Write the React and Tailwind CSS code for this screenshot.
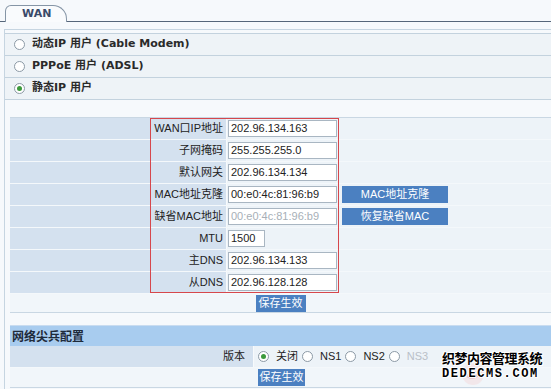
import React from "react";

const font = { fontFamily: '"Liberation Sans", "Noto Sans CJK SC", sans-serif' };
const boldFont = { fontFamily: '"DejaVu Sans", "Noto Sans CJK SC", sans-serif' };

function Radio({ checked }) {
  return (
    <span className="inline-flex w-[11px] h-[11px] rounded-full border border-[#8c9aa6] bg-white items-center justify-center shrink-0">
      {checked && <span className="w-[5px] h-[5px] rounded-full bg-[#3c9a3c]" />}
    </span>
  );
}

function Btn({ children, className = "" }) {
  return (
    <span className={`inline-flex items-center justify-center h-[17px] bg-[#4b80c1] text-white text-[11px] ${className}`}>
      {children}
    </span>
  );
}

const rows = [
  { label: "WAN口IP地址", value: "202.96.134.163" },
  { label: "子网掩码", value: "255.255.255.0" },
  { label: "默认网关", value: "202.96.134.134" },
  { label: "MAC地址克隆", value: "00:e0:4c:81:96:b9", btn: "MAC地址克隆" },
  { label: "缺省MAC地址", value: "00:e0:4c:81:96:b9", btn: "恢复缺省MAC", muted: true },
  { label: "MTU", value: "1500", short: true },
  { label: "主DNS", value: "202.96.134.133" },
  { label: "从DNS", value: "202.96.128.128" },
];

export default function App() {
  return (
    <div className="relative w-[551px] h-[389px] overflow-hidden bg-[#f6f9fc] text-[#222]" style={font}>
      {/* tab strip */}
      <div className="flex items-end h-[22px] border-b border-[#56667a] pl-[5px]">
        <div
          className="-mb-px w-[62px] h-[17px] border border-b-0 border-[#8595a6] bg-[#f9fbfd] rounded-tl-[6px] rounded-tr-[14px] flex items-center pl-[16px] text-[11px] font-bold text-[#3a4a6a]"
          style={boldFont}
        >
          WAN
        </div>
      </div>

      <div className="mt-[7px] ml-[4px] border-l border-t border-[#c6d5e1] pt-[3px] h-[400px]">
        {/* connection type */}
        <div className="border-b border-[#c3d2de] bg-[#eef3f7]" style={boldFont}>
          {[
            ["动态IP 用户 (Cable Modem)", false],
            ["PPPoE 用户 (ADSL)", false],
            ["静态IP 用户", true],
          ].map(([t, c]) => (
            <div key={t} className="h-[22px] border-t border-[#c3d2de] flex items-center pl-[9px] gap-[7px] text-[11px] font-bold text-[#2a2a2a]">
              <Radio checked={c} />
              <span>{t}</span>
            </div>
          ))}
        </div>

        {/* static ip table */}
        <div className="relative mt-[17px] ml-[5px] border-t border-[#c9d7e3]">
          {rows.map((r) => (
            <div key={r.label} className="flex h-[22px] border-b border-[#f4f8fb]">
              <div className="w-[216px] bg-[#d4e1ef] text-right pr-[3px] text-[11px] flex items-center justify-end">
                {r.label}
              </div>
              <div className="flex-1 bg-[#edf3f8] border-l border-[#f7fafc] flex items-center pl-[1px]">
                <span
                  className={`h-[17px] border border-[#a9b6c2] bg-white flex items-center pl-[2px] text-[11px] ${
                    r.short ? "w-[37px]" : "w-[109px]"
                  } ${r.muted ? "text-[#a7afb7]" : "text-[#222]"}`}
                >
                  {r.value}
                </span>
                {r.btn && <Btn className="ml-[5px] w-[106px]">{r.btn}</Btn>}
              </div>
            </div>
          ))}
          <div className="h-[19px] flex items-center justify-center bg-[#f1f6fa] border-b border-[#c9d7e3]">
            <Btn className="w-[50px]">保存生效</Btn>
          </div>
          {/* annotation box */}
          <div className="absolute left-[140px] top-0 w-[189px] h-[175px] border border-[#d6474c] pointer-events-none" />
        </div>

        {/* network sentinel */}
        <div className="mt-[12px] ml-[5px]">
          <div className="h-[21px] bg-[#a8ccef] flex items-center pl-[2px] text-[12px] font-bold text-[#1e2a3a] border-t border-[#c9dcf0]" style={{ fontFamily: '"Noto Sans CJK SC", sans-serif' }}>
            网络尖兵配置
          </div>
          <div className="flex h-[22px] border-b border-[#f4f8fb]">
            <div className="w-[243px] bg-[#d4e1ef] flex items-center justify-end pr-[8px] text-[11px]">版本</div>
            <div className="flex-1 bg-[#edf3f8] border-l border-[#f7fafc] flex items-center pl-[4px] text-[11px]">
              <Radio checked />
              <span className="ml-[7px] mr-[4px]">关闭</span>
              <Radio />
              <span className="ml-[7px] mr-[4px]">NS1</span>
              <Radio />
              <span className="ml-[7px] mr-[4px]">NS2</span>
              <Radio />
              <span className="ml-[7px] text-[#b9c0c8]">NS3</span>
            </div>
          </div>
          <div className="h-[20px] flex items-center bg-[#f1f6fa] border-b border-[#c9d7e3] pl-[248px]">
            <Btn className="w-[47px]">保存生效</Btn>
          </div>
        </div>
      </div>

      {/* watermark */}
      <div className="absolute left-[436px] top-[350px] w-[110px] h-[36px] pointer-events-none">
        <svg className="absolute left-[22px] top-[10px]" width="30" height="26" viewBox="0 0 30 26">
          <circle cx="15" cy="14" r="11" fill="#f3e3e6" opacity="0.8" />
          <path d="M7 14 Q15 22 23 12" stroke="#e8c6cc" strokeWidth="2.5" fill="none" />
        </svg>
        <div
          className="relative text-[13px] font-bold leading-[15px] text-black tracking-[-0.5px] pl-[6px]"
          style={{ fontFamily: '"Noto Sans CJK SC", sans-serif', textShadow: "1px 0 #fff, -1px 0 #fff, 0 1px #fff, 0 -1px #fff, 1px 1px #fff, -1px -1px #fff" }}
        >
          织梦内容管理系统
        </div>
        <div
          className="relative text-[12px] font-bold leading-[14px] text-black tracking-[1.6px] pl-[6px] mt-[2px]"
          style={{ fontFamily: '"Liberation Mono", monospace', textShadow: "1px 0 #fff, -1px 0 #fff, 0 1px #fff, 0 -1px #fff, 1px 1px #fff, -1px -1px #fff" }}
        >
          DEDECMS.COM
        </div>
      </div>
    </div>
  );
}
